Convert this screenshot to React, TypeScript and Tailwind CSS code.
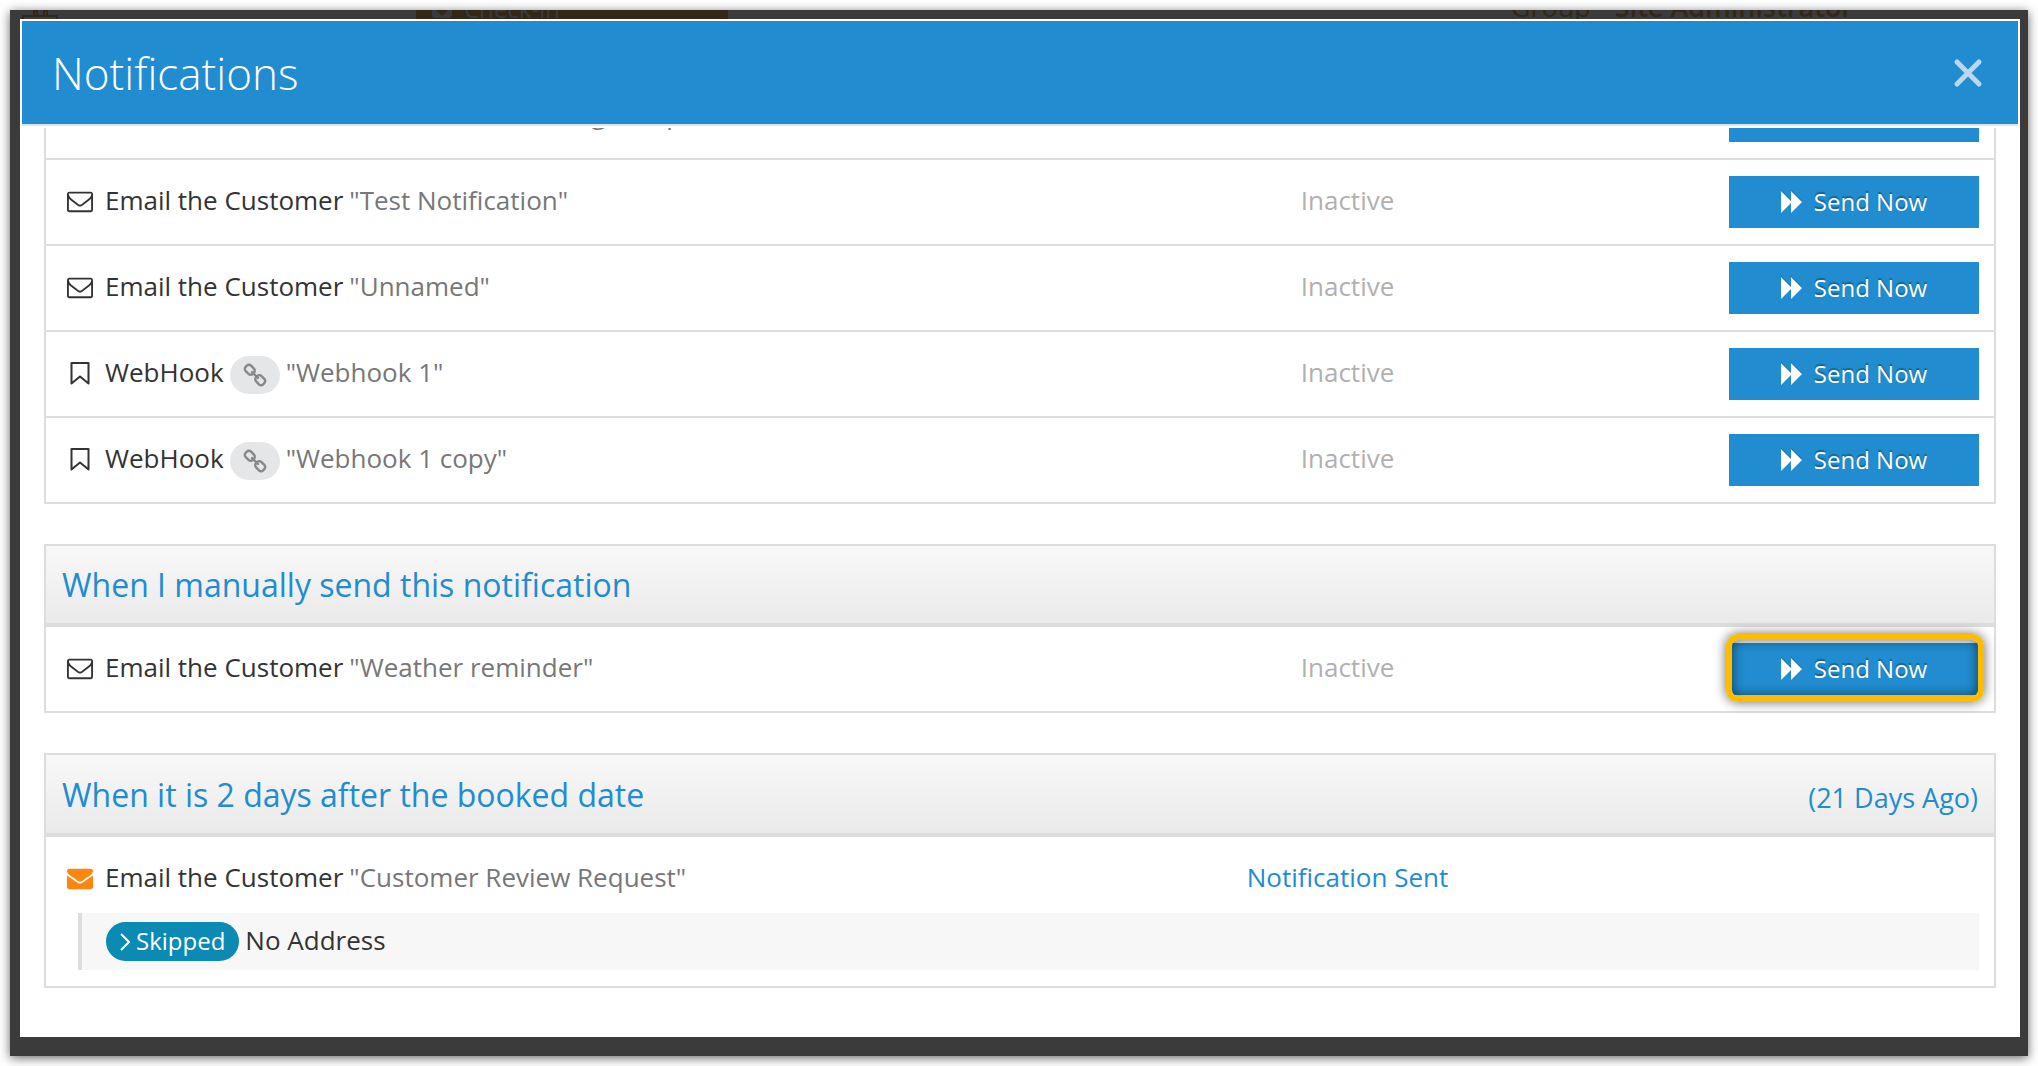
import React from 'react';

type IconProps = { className?: string };

interface NotificationItem {
    id: number;
    kind: 'email' | 'email-sent' | 'webhook';
    action: string;
    name: string;
    status: string;
    highlighted?: boolean;
    result?: { label: string; message: string };
}

interface NotificationGroup {
    id: string;
    title: string;
    when?: string;
    items: NotificationItem[];
}

const groups: NotificationGroup[] = [
    {
        id: 'manual',
        title: 'When I manually send this notification',
        items: [
            { id: 6, kind: 'email', action: 'Email the Customer', name: 'Weather reminder', status: 'Inactive', highlighted: true },
        ],
    },
    {
        id: 'after-booked',
        title: 'When it is 2 days after the booked date',
        when: '(21 Days Ago)',
        items: [
            {
                id: 7,
                kind: 'email-sent',
                action: 'Email the Customer',
                name: 'Customer Review Request',
                status: 'Notification Sent',
                result: { label: 'Skipped', message: 'No Address' },
            },
        ],
    },
];

const scrolledItems: NotificationItem[] = [
    { id: 1, kind: 'email', action: 'Email the Customer', name: 'Notification Booking Setup', status: 'Inactive' },
    { id: 2, kind: 'email', action: 'Email the Customer', name: 'Test Notification', status: 'Inactive' },
    { id: 3, kind: 'email', action: 'Email the Customer', name: 'Unnamed', status: 'Inactive' },
    { id: 4, kind: 'webhook', action: 'WebHook', name: 'Webhook 1', status: 'Inactive' },
    { id: 5, kind: 'webhook', action: 'WebHook', name: 'Webhook 1 copy', status: 'Inactive' },
];

const EnvelopeOutline: React.FC<IconProps> = ({ className }) => (
    <svg viewBox="0 0 1792 1792" fill="currentColor" className={className} aria-hidden="true">
        <path d="M1664 1504v-768q-32 36-69 66-268 206-426 338-51 43-83 67t-86.5 48.5-102.5 24.5h-2q-48 0-102.5-24.5t-86.5-48.5-83-67q-158-132-426-338-37-30-69-66v768q0 13 9.5 22.5t22.5 9.5h1472q13 0 22.5-9.5t9.5-22.5zm0-1051v-24.5t-.5-13-3-12.5-5.5-9-9-7.5-14-2.5h-1472q-13 0-22.5 9.5t-9.5 22.5q0 168 147 284 193 152 401 317 6 5 35 29.5t46 37.5 44.5 31.5 50.5 27.5 43 9h2q20 0 43-9t50.5-27.5 44.5-31.5 46-37.5 35-29.5q208-165 401-317 54-43 100.5-115.5t46.5-131.5zm128-37v1088q0 66-47 113t-113 47h-1472q-66 0-113-47t-47-113v-1088q0-66 47-113t113-47h1472q66 0 113 47t47 113z" />
    </svg>
);

const EnvelopeSolid: React.FC<IconProps> = ({ className }) => (
    <svg viewBox="0 0 1792 1792" fill="currentColor" className={className} aria-hidden="true">
        <path d="M1792 710v794q0 66-47 113t-113 47h-1472q-66 0-113-47t-47-113v-794q44 49 101 87 362 246 497 345 57 42 92.5 65.5t94.5 48 110 24.5h2q51 0 110-24.5t94.5-48 92.5-65.5q170-123 498-345 57-39 100-87zm0-294q0 79-49 151t-122 123q-376 261-468 325-10 7-42.5 31t-54 38.5-52 32.5-57.5 27-50 9h-2q-23 0-50-9t-57.5-27-52-32.5-54-38.5-42.5-31q-91-64-262-182.5t-205-142.5q-62-42-117-115.5t-55-136.5q0-78 41.5-130t118.5-52h1472q65 0 112.5 47t47.5 113z" />
    </svg>
);

const BookmarkOutline: React.FC<IconProps> = ({ className }) => (
    <svg viewBox="0 0 26 26" fill="none" stroke="currentColor" strokeWidth="2" strokeLinejoin="round" className={className} aria-hidden="true">
        <path d="M4.500 3h17v20.500l-8.500-7-8.500 7z" />
    </svg>
);

const LinkIcon: React.FC<IconProps> = ({ className }) => (
    <svg viewBox="0 0 24 24" fill="none" stroke="currentColor" strokeWidth="2.400" strokeLinecap="round" className={className} aria-hidden="true">
        <rect x="1.800" y="3" width="10" height="7.600" rx="3" transform="rotate(45 6.800 6.800)" />
        <rect x="12.200" y="13.400" width="10" height="7.600" rx="3" transform="rotate(45 17.200 17.200)" />
        <path d="M9 9l6 6" />
    </svg>
);

const ForwardIcon: React.FC<IconProps> = ({ className }) => (
    <svg viewBox="0 0 21 22" fill="currentColor" className={className} aria-hidden="true">
        <path d="M0 0l10 10V0l11 11-11 11V12L0 22z" />
    </svg>
);

const KindIcon: React.FC<{ kind: NotificationItem['kind'] }> = ({ kind }) => {
    if (kind === 'webhook') return <BookmarkOutline className="size-[26px]" />;
    if (kind === 'email-sent') return <EnvelopeSolid className="size-[26px] text-[#ff860d]" />;
    return <EnvelopeOutline className="size-[26px]" />;
};

const SendButton: React.FC<{ highlighted?: boolean }> = ({ highlighted }) => (
    <div className="relative ml-auto w-[250px]">
        <button
            type="button"
            className="flex h-[52px] w-full items-center justify-center gap-3 bg-[#218ccf] text-2xl text-white text-shadow-[0_-2px_1px_rgba(0,0,0,0.3)]"
        >
            <ForwardIcon className="h-[22px] w-[21px] drop-shadow-[0_-1px_0_rgba(0,0,0,0.3)]" />
            Send Now
        </button>
        {highlighted && (
            <span className="pointer-events-none absolute -top-[9px] -right-[5px] -bottom-[7px] -left-[3px] rounded-xl border-6 border-[#fdbb02] shadow-[0_0_12px_rgba(0,0,0,0.6),inset_0_0_12px_rgba(0,0,0,0.6)]" />
        )}
    </div>
);

const NotificationRow: React.FC<{ item: NotificationItem }> = ({ item }) => (
    <>
        <tr className="not-first:*:border-t-2 *:border-[#dddddd]">
            <td className={`w-[48%] pl-[21px] ${item.result ? 'pt-2' : ''}`}>
                <div className="flex items-center pb-[2px]">
                    <KindIcon kind={item.kind} />
                    <span className="ml-3 pb-[2px]">{item.action}</span>
                    {item.kind === 'webhook' && (
                        <a href="#webhook" aria-label="Open webhook" className="-mb-1 ml-[6px] flex h-[38px] w-[50px] items-center justify-center rounded-full bg-[#e4e6e8] text-[#888888]">
                            <LinkIcon className="size-6" />
                        </a>
                    )}
                    <span className="ml-[6px] pb-[2px] text-[#777777]">&quot;{item.name}&quot;</span>
                </div>
            </td>
            <td className={`pb-1 text-center ${item.result ? 'pt-2 text-[#218ccf]' : 'text-[#b0b0b0]'}`}>{item.status}</td>
            <td className={`w-[280px] pr-[15px] ${item.result ? 'h-[76px]' : 'py-4'}`}>
                {!item.result && <SendButton highlighted={item.highlighted} />}
            </td>
        </tr>
        {item.result && (
            <tr>
                <td colSpan={3} className="pr-[15px] pb-4 pl-8">
                    <div className="flex h-[57px] items-center gap-[6px] border-l-4 border-[#dddddd] bg-[#f7f7f7] pl-6">
                        <span className="flex h-[39px] items-center gap-[6px] rounded-full bg-[#0b8ab4] px-[14px] text-2xl font-medium text-white">
                            <svg viewBox="0 0 10 18" fill="none" stroke="currentColor" strokeWidth="2" className="h-[18px] w-[10px]" aria-hidden="true">
                                <path d="M1 1l8 8-8 8" />
                            </svg>
                            <span className="pb-[2px]">{item.result.label}</span>
                        </span>
                        <span className="pb-1">{item.result.message}</span>
                    </div>
                </td>
            </tr>
        )}
    </>
);

const NotificationTable: React.FC<{ items: NotificationItem[] }> = ({ items }) => (
    <table className="w-full table-fixed border-separate border-spacing-0">
        <tbody>
            {items.map((item) => (
                <NotificationRow key={item.id} item={item} />
            ))}
        </tbody>
    </table>
);

// Sliver of the dimmed booking page that shows above the dialog
const PageBehind: React.FC = () => (
    <div className="flex h-[9px] items-end overflow-hidden text-[#332816]" aria-hidden="true">
        <svg viewBox="0 0 36 9" fill="none" stroke="currentColor" strokeWidth="2" className="ml-[2px] h-[9px] w-9">
            <path d="M1 9V6h34v3M12 6V1h3v5M22 6V1h3v5" />
        </svg>
        <div className="ml-[358px] flex h-[9px] w-[312px] items-end bg-[#332816] text-2xl leading-5 text-[#3b3b3b]">
            <svg viewBox="0 0 20 9" fill="currentColor" className="ml-4 h-[9px] w-5 shrink-0">
                <path d="M0 0h4l6 6 6-6h4v5q0 3-3 3H3Q0 8 0 5z" />
            </svg>
            <span className="ml-3">Check-in</span>
        </div>
        <span className="ml-auto text-[27px] leading-6">Group</span>
        <span className="mr-[167px] ml-6 text-[27px] leading-6 font-semibold">Site Administrator</span>
    </div>
);

export default function App() {
    return (
        <div className="min-h-screen bg-white p-[10px] font-['Open_Sans','Noto_Sans',sans-serif] text-[26px] leading-9 text-[#333333]">
            <div className="bg-[#3b3b3b] pr-2 pb-[19px] pl-[10px] shadow-[0_2px_10px_rgba(0,0,0,0.6)]">
                <PageBehind />

                <div role="dialog" aria-label="Notifications" className="border-2 border-white bg-white">
                    <header className="flex h-[105px] items-center justify-between border-b-2 border-[#dfe4e8] bg-[#218ccf] pr-[35px] pl-[30px] text-white">
                        <h1 className="text-[44px] leading-[60px] font-light">Notifications</h1>
                        <button type="button" aria-label="Close" className="text-[#b9d7ee]">
                            <svg viewBox="0 0 30 30" fill="none" stroke="currentColor" strokeWidth="5" strokeLinecap="round" className="size-[30px]" aria-hidden="true">
                                <path d="M4 4l22 22M26 4L4 26" />
                            </svg>
                        </button>
                    </header>

                    <div className="mt-[2px] flex flex-col gap-10 px-[22px] pb-[47px]">
                        {/* Scrolled list: the first row is partly under the header */}
                        <section className="flex h-[376px] flex-col justify-end overflow-hidden border-x-2 border-b-2 border-[#dddddd]">
                            <NotificationTable items={scrolledItems} />
                        </section>

                        {groups.map((group) => (
                            <section key={group.id} className="border-2 border-[#dddddd]">
                                <div className="flex items-center justify-between border-b-4 border-[#dddddd] bg-linear-to-b from-[#f8f8f8] to-[#eaeaea] px-4 py-[18px] text-[#218ccf]">
                                    <h2 className="text-[32px] leading-[41px]">{group.title}</h2>
                                    {group.when && <span className="pt-2 text-[27px] leading-[34px]">{group.when}</span>}
                                </div>
                                <NotificationTable items={group.items} />
                            </section>
                        ))}
                    </div>
                </div>
            </div>
        </div>
    );
}
